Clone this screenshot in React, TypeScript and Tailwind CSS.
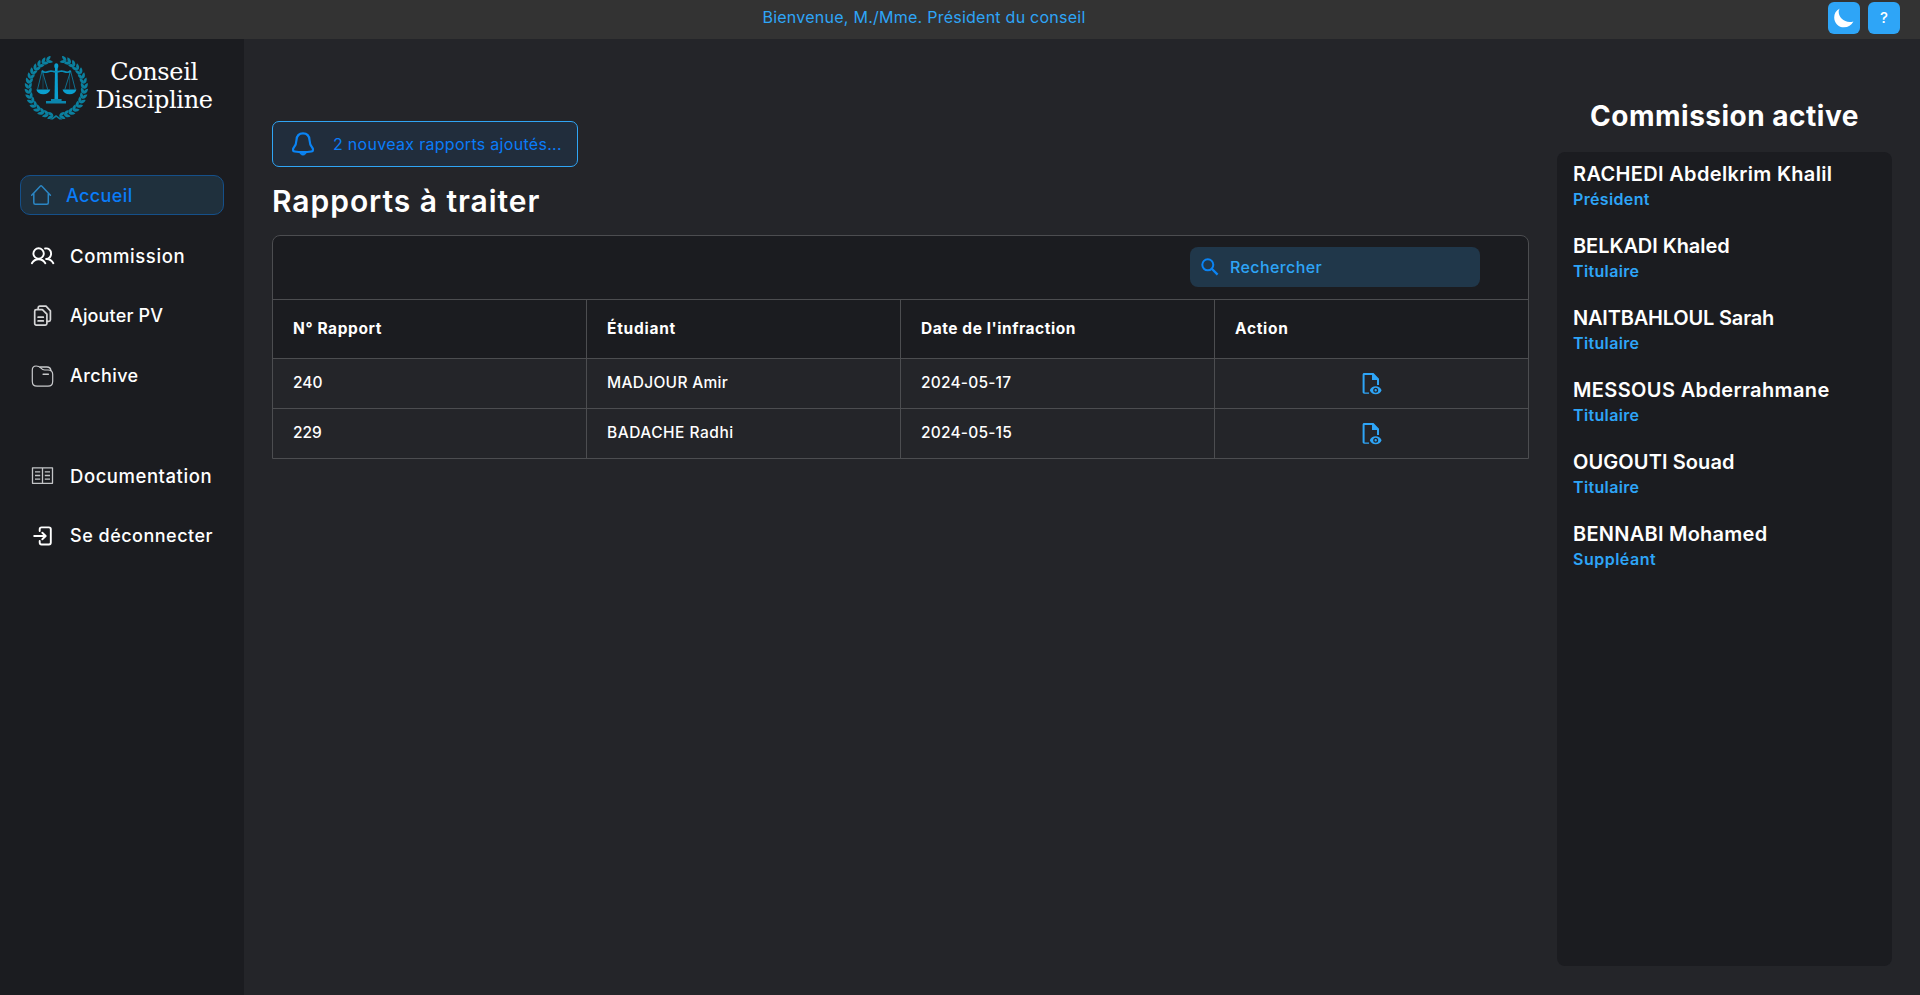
import React from "react";

function leaf(cx: number, cy: number, deg: number, len: number) {
  return `translate(${cx.toFixed(2)} ${cy.toFixed(2)}) rotate(${deg.toFixed(1)}) scale(${len})`;
}

function Logo() {
  const leaves: string[] = [];
  for (let i = 0; i < 16; i++) {
    const a = 6 + i * 10.2;
    const r = (a * Math.PI) / 180;
    const x = 32.3 + 27.8 * Math.sin(r);
    const y = 31.6 + 28.5 * Math.cos(r);
    leaves.push(leaf(x, y, -a + 30, 6.8));
    leaves.push(leaf(x, y, -a - 30, 6.8));
  }
  const branch = leaves.map((t) => (
    <path key={t} d="M0 0C.25-.3.65-.3 1 0C.65.3.25.3 0 0Z" transform={t} />
  ));
  return (
    <svg viewBox="0 0 64 64" className="h-16 w-16 shrink-0 overflow-hidden">
      <g fill="#0b809f">
        <g>{branch}</g>
        <g transform="translate(64.6 0) scale(-1 1)">{branch}</g>
        <path d="M26 63.500l6-4.600 6.500 4.600h-3l-3.300-2.600-3.400 2.600z" />
      </g>
      <g fill="#0aa0cf">
        <ellipse cx="32.300" cy="10" rx="2" ry="2.800" />
        <path d="M31 12h2.600l.5 31h-3.600z" />
        <path d="M27 43h10.600v2h4.400v2.600H22V45h5z" fill="#0b86ad" />
        <path d="M12.300 33.500h14c-.8 3-3.300 4.700-7 4.700s-6.200-1.700-7-4.700zM38.500 33.500h14c-.8 3-3.300 4.700-7 4.700s-6.200-1.700-7-4.700z" />
      </g>
      <g fill="none" stroke="#0b8fb8">
        <path d="M18 14.500c2 3.800 6 .8 9 .5 2 0 4 1 5.300 1s3.300-1 5.300-1c3 .3 7 3.300 9-.5" strokeWidth="1.700" />
        <path d="M18 15l-4.500 18.500M18.300 15l5.400 18.500M46.600 15l-5.800 18.500M46.600 15l4.700 18.500" strokeWidth=".9" opacity=".8" />
        <path d="M19 17v16M45.600 17v16" strokeWidth=".6" opacity=".6" />
      </g>
    </svg>
  );
}

const HomeIcon = () => (
  <svg viewBox="0 0 24 24" className="h-6 w-6" fill="none" stroke="#2b86c4" strokeWidth="1.500" strokeLinecap="round" strokeLinejoin="round">
    <path d="M2.700 12.200 11.200 3.200a1.200 1.200 0 0 1 1.700 0l8.500 9M4.800 10.500v9.200c0 .9.600 1.500 1.500 1.500h11.500c.9 0 1.500-.6 1.500-1.500v-9.200" />
  </svg>
);
const UsersIcon = () => (
  <svg viewBox="0 0 26 24" className="h-6 w-[26px]" fill="none" stroke="#fff" strokeWidth="1.900" strokeLinecap="round" strokeLinejoin="round">
    <circle cx="8.600" cy="9.500" r="5.200" />
    <path d="M1.900 19.200c1.600-2.800 4-4 6.700-4s5.100 1.200 6.700 4M15.100 4.500c3.300-.7 6 1.800 6 5s-2.300 5.200-5 5.500c3.300-.2 5.700 1.400 7.200 4.200" />
  </svg>
);
const FilesIcon = () => (
  <svg viewBox="0 0 24 24" className="h-6 w-6" fill="none" stroke="#d6d6d7" strokeWidth="1.700" strokeLinecap="round" strokeLinejoin="round">
    <path d="M4.700 7.200c0-.9.700-1.600 1.600-1.600h6.100l4.500 4.600v9.400c0 .9-.7 1.600-1.600 1.600h-9c-.9 0-1.600-.7-1.600-1.600z" />
    <path d="M8.200 5.200V3.800c0-.9.700-1.600 1.600-1.600h6.200l4.400 4.600v9c0 .9-.7 1.600-1.600 1.600h-1.400M8.100 13.200h5.200M8.100 16.900h5.200" />
  </svg>
);
const FolderIcon = () => (
  <svg viewBox="0 0 24 24" className="h-6 w-6" fill="none" stroke="#c9cacc" strokeWidth="1.200" strokeLinecap="round" strokeLinejoin="round">
    <path d="M2.300 6c0-2.500 1.300-4 3.800-4 2.200 0 3.400.4 4.600 1.800 1.300 1.500 2 2.200 4 2.200h3.300c3.300 0 4.700 1.500 4.700 4.500v6.800c0 3.300-1.500 4.900-4.700 4.900H7.100c-3.300 0-4.800-1.600-4.800-4.900z" />
    <path d="M10.100 3h6.800c2.300 0 3.700 1 4 3.500M13.100 10.300h5.300" strokeWidth="1.400" />
  </svg>
);
const BookIcon = () => (
  <svg viewBox="0 0 24 24" className="h-6 w-6" fill="none" stroke="#c4c5c7" strokeWidth="1.300" strokeLinejoin="round">
    <path d="M2.500 3.800h20v15.500h-20zM12.500 3.800v15.500M5 7.800h5.200M5 11.500h5.200M5 15.200h5.200M14.800 7.800h5.200M14.800 11.500h5.200M14.800 15.200h5.200" />
  </svg>
);
const ExitIcon = () => (
  <svg viewBox="0 0 24 24" className="h-6 w-6" fill="none" stroke="#fff" strokeWidth="1.900" strokeLinecap="round" strokeLinejoin="round">
    <path d="M9.700 7V5.300c0-1.100.8-1.900 1.900-1.900h7.300c1.100 0 1.900.8 1.900 1.900v13.300c0 1.100-.8 1.900-1.900 1.900h-7.300c-1.100 0-1.900-.8-1.900-1.900V17M4.200 12h11.300M12.300 8.700l3.400 3.300-3.400 3.300" />
  </svg>
);
const BellIcon = () => (
  <svg viewBox="0 0 24 26" className="h-[26px] w-6 shrink-0" fill="none" stroke="#0a84f5" strokeWidth="2.200" strokeLinejoin="round">
    <path d="M12 2.300c-4 0-6.300 2.800-6.500 6.700-.2 3.500-.7 5.200-2.500 7.300-1.600 1.900-1.300 3.900.6 4.200 5.600.9 11.200.9 16.800 0 1.900-.3 2.200-2.300.6-4.200-1.800-2.100-2.300-3.800-2.500-7.300-.2-3.900-2.500-6.700-6.500-6.700z" />
    <path d="M9 22.200c1 2.400 5 2.400 6 0z" fill="#0a84f5" strokeWidth="1" />
  </svg>
);
const SearchIcon = () => (
  <svg viewBox="0 0 18 18" className="h-[18px] w-[18px] shrink-0" fill="none" stroke="#0a84f5" strokeWidth="2">
    <circle cx="6.800" cy="6.800" r="5.500" />
    <path d="M10.800 10.800l5.800 5.800" strokeWidth="2.300" />
  </svg>
);
const FileEyeIcon = () => (
  <svg viewBox="0 0 20 22" className="h-[22px] w-5" fill="#2ea5f7">
    <path d="M2.300 0h9.200L17 5.700V12h-2V7h-5V2H2.600v17.500H7v1.300H2.300C1.200 20.800.6 20.200.6 19.100V1.700C.6.600 1.200 0 2.300 0z" />
    <path fillRule="evenodd" d="M13.700 13.300c2.700 0 4.900 1.600 5.900 4-1 2.400-3.200 4-5.900 4s-4.900-1.600-5.900-4c1-2.400 3.200-4 5.900-4zm0 1.500a2.500 2.500 0 1 0 0 5 2.500 2.500 0 0 0 0-5zm0 1.300a1.200 1.200 0 1 1 0 2.400 1.200 1.200 0 0 1 0-2.400z" />
  </svg>
);
const MoonIcon = () => (
  <svg viewBox="0 0 20 20" className="h-5 w-5" fill="#fff">
    <path d="M5.800.5C1.900 2.400.2 5.700.2 9.400c0 5.500 4.300 9.900 9.800 9.900 4.200 0 7.500-2 9.400-5.800-1.500.4-2.400.5-3.600.5C9.300 14 4.700 8.600 4.700 4c0-1.300.3-2.300 1.100-3.500z" />
  </svg>
);

function NavItem({ icon, label, cls }: { icon: React.ReactNode; label: string; cls: string }) {
  return (
    <a className="flex h-10 items-center pl-[30px]">
      <span className="flex w-10 items-center">{icon}</span>
      <span className={`whitespace-nowrap font-medium leading-10 text-white ${cls}`}>{label}</span>
    </a>
  );
}

const members = [
  { name: "RACHEDI Abdelkrim Khalil", role: "Président", cls: "tracking-[0.33px]", roleCls: "tracking-[0.35px]" },
  { name: "BELKADI Khaled", role: "Titulaire", cls: "tracking-[-0.07px]", roleCls: "tracking-[0.35px]" },
  { name: "NAITBAHLOUL Sarah", role: "Titulaire", cls: "tracking-[-0.19px]", roleCls: "tracking-[0.35px]" },
  { name: "MESSOUS Abderrahmane", role: "Titulaire", cls: "tracking-[0.37px]", roleCls: "tracking-[0.35px]" },
  { name: "OUGOUTI Souad", role: "Titulaire", cls: "tracking-[0.1px]", roleCls: "tracking-[0.35px]" },
  { name: "BENNABI Mohamed", role: "Suppléant", cls: "tracking-[0.25px]", roleCls: "tracking-[0.5px]" },
];

const rows = [
  { id: "240", student: "MADJOUR Amir", date: "2024-05-17", cls: "tracking-[0.3px]" },
  { id: "229", student: "BADACHE Radhi", date: "2024-05-15", cls: "tracking-[0.5px]" },
];

const headings = [
  { label: "N° Rapport", cls: "tracking-[0.6px]" },
  { label: "Étudiant", cls: "tracking-[0.75px]" },
  { label: "Date de l'infraction", cls: "tracking-[0.55px]" },
  { label: "Action", cls: "tracking-[0.7px]" },
];

export default function App() {
  return (
    <div className="flex h-[995px] w-[1920px] flex-col overflow-hidden bg-[#242529] font-['Inter',sans-serif] text-white">
      <header className="flex h-[39px] shrink-0 items-start bg-[#333333]">
        <p className="w-[1828px] pl-[20px] text-center text-[16px] leading-[35px] tracking-[0.25px] text-[#2ea5f7]">
          Bienvenue, M./Mme. Président du conseil
        </p>
        <div className="mt-0.5 flex gap-2">
          <button className="flex h-8 w-8 items-center justify-center rounded-md bg-[#2ea5f7]"><MoonIcon /></button>
          <button className="flex h-8 w-8 items-center justify-center rounded-md bg-[#2ea5f7] text-[15px] font-medium">?</button>
        </div>
      </header>

      <div className="flex min-h-0 flex-1">
        <aside className="flex w-[244px] shrink-0 flex-col bg-[#1b1c20]">
          <div className="flex h-[136px] items-start pl-6 pt-[17px]">
            <Logo />
            <div className="ml-[5px] w-[122px] pt-0.5 text-center font-['DejaVu_Serif',serif] text-[24px] leading-7 tracking-[-0.35px]">
              Conseil
              <br />
              Discipline
            </div>
          </div>
          <nav className="flex flex-col gap-5">
            <a className="mx-5 flex h-10 items-center rounded-[10px] border border-[#15508a] bg-[#1f303d] pl-[7px]">
              <span className="w-[38px] pl-px"><HomeIcon /></span>
              <span className="pt-px text-[18px] font-medium tracking-[0.4px] text-[#0a7cf8]">Accueil</span>
            </a>
            <div className="flex flex-col gap-5 pt-px">
              <NavItem icon={<UsersIcon />} label="Commission" cls="text-[18.500px] tracking-[0.6px]" />
              <NavItem icon={<FilesIcon />} label="Ajouter PV" cls="text-[18px] tracking-[0.15px]" />
              <NavItem icon={<FolderIcon />} label="Archive" cls="text-[18px] tracking-[0.4px]" />
            </div>
          </nav>
          <nav className="mt-[60px] flex flex-col gap-5">
            <NavItem icon={<BookIcon />} label="Documentation" cls="text-[18.500px] tracking-[0.55px]" />
            <NavItem icon={<ExitIcon />} label="Se déconnecter" cls="text-[18px] tracking-[0.5px]" />
          </nav>
        </aside>

        <main className="flex flex-1 pl-7 pr-7">
          <section className="w-[1257px] pt-[82px]">
            <div className="flex h-[46px] w-[306px] items-center rounded-[7px] border border-[#30a5f5] bg-[#212d3c] pl-[18px]">
              <BellIcon />
              <span className="ml-[18px] whitespace-nowrap pb-px text-[16px] tracking-[0.3px] text-[#0a7cf8]">2 nouveax rapports ajoutés...</span>
            </div>
            <h1 className="mt-[13px] h-[55px] whitespace-nowrap text-[30px] font-semibold leading-[42px] tracking-[0.95px]">Rapports à traiter</h1>

            <div className="rounded-t-[8px] border border-[#4c4d50] bg-[#1b1c20]">
              <div className="flex h-[63px] justify-end pr-[48px] pt-[11px]">
                <div className="flex h-10 w-[290px] items-center rounded-[8px] bg-[#20374a] pl-[11px]">
                  <SearchIcon />
                  <span className="ml-[11px] text-[16px] font-medium tracking-[0.4px] text-[#2ea5f7]">Rechercher</span>
                </div>
              </div>
              <div className="grid h-[59px] grid-cols-[314px_314px_314px_1fr] divide-x divide-[#4c4d50] border-t border-[#4c4d50]">
                {headings.map((h) => (
                  <div key={h.label} className={`flex items-center pl-5 text-[15.500px] font-bold ${h.cls}`}>{h.label}</div>
                ))}
              </div>
              {rows.map((r) => (
                <div key={r.id} className="grid h-[50px] grid-cols-[314px_314px_314px_1fr] divide-x divide-[#4c4d50] border-t border-[#4c4d50] bg-[#242529] text-[15.500px] font-medium">
                  <div className="flex items-center pb-0.5 pl-5">{r.id}</div>
                  <div className={`flex items-center pb-0.5 pl-5 ${r.cls}`}>{r.student}</div>
                  <div className="flex items-center pb-0.5 pl-5 tracking-[0.2px]">{r.date}</div>
                  <div className="flex items-center justify-center pl-px">
                    <FileEyeIcon />
                  </div>
                </div>
              ))}
            </div>
          </section>

          <section className="ml-7 w-[335px] pt-[57px]">
            <h2 className="h-[56px] whitespace-nowrap text-center text-[28px] font-bold leading-[40px] tracking-[0.5px]">Commission active</h2>
            <ul className="h-[814px] rounded-[8px] bg-[#1b1c20] pl-4 pt-[9px]">
              {members.map((m) => (
                <li key={m.name} className="h-[72px] whitespace-nowrap">
                  <p className={`text-[20px] font-semibold leading-[26px] ${m.cls}`}>{m.name}</p>
                  <p className={`text-[16px] font-semibold leading-6 text-[#2ea5f7] ${m.roleCls}`}>{m.role}</p>
                </li>
              ))}
            </ul>
          </section>
        </main>
      </div>
    </div>
  );
}
